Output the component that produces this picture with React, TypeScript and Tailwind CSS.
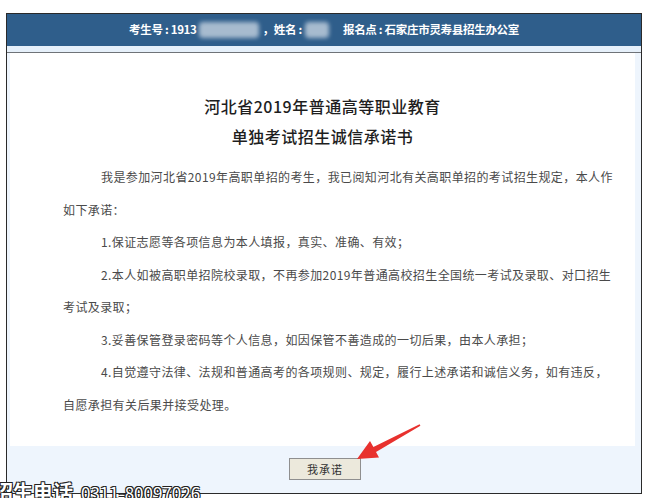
const items = [
  "我是参加河北省2019年高职单招的考生，我已阅知河北有关高职单招的考试招生规定，本人作如下承诺：",
  "1.保证志愿等各项信息为本人填报，真实、准确、有效；",
  "2.本人如被高职单招院校录取，不再参加2019年普通高校招生全国统一考试及录取、对口招生考试及录取；",
  "3.妥善保管登录密码等个人信息，如因保管不善造成的一切后果，由本人承担；",
  "4.自觉遵守法律、法规和普通高考的各项规则、规定，履行上述承诺和诚信义务，如有违反，自愿承担有关后果并接受处理。",
];

export default function App() {
  return (
    <div className="relative w-[654px] h-[498px] overflow-hidden bg-white font-['Noto_Sans_CJK_SC',sans-serif]">
      <div className="ml-[6px] mt-[13px] w-[636px] h-[481px] border border-[#2a2a2a] bg-[#eef5fd] flex flex-col">
        {/* Header */}
        <div className="h-[32px] bg-[#2f5e8b] flex items-center justify-center text-white text-[11.5px] font-bold tracking-[-0.3px]">
          <span>考生号 : 1913</span>
          <span className="mx-[2px] w-[60px] h-[16px] rounded-sm bg-[#a7bbcf] blur-[2px]" />
          <span className="ml-[2px]">，姓名 :</span>
          <span className="ml-[3px] w-[24px] h-[16px] rounded-sm bg-[#a7bbcf] blur-[2px]" />
          <span className="ml-[14px]">报名点 : 石家庄市灵寿县招生办公室</span>
        </div>
        <div className="h-[6px] bg-[#e6f0fa]" />
        <div className="h-[1px] bg-[#6f7378]" />

        {/* Content */}
        <div className="ml-[3px] mr-[6px] h-[393px] bg-white pt-[38px]">
          <div className="text-center text-[16px] font-medium text-[#1e1e1e] leading-[30px] tracking-[0.5px]">
            <p>河北省2019年普通高等职业教育</p>
            <p>单独考试招生诚信承诺书</p>
          </div>
          <div className="mt-[10px] pl-[53px] pr-[19px] text-[12px] leading-[32.5px] tracking-[0.4px] text-[#4a4a4a]">
            {items.map((t) => (
              <p key={t} className="indent-[38px]">
                {t}
              </p>
            ))}
          </div>
        </div>

        {/* Footer */}
        <div className="flex-1 flex justify-center pt-[12px]">
          <button className="w-[72px] h-[22px] ml-[2px] bg-[#ece9dc] border border-[#8f8f8f] text-[11px] text-[#333] tracking-[1px]">
            我承诺
          </button>
        </div>
      </div>

      {/* Red arrow */}
      <svg className="absolute left-0 top-0" width="654" height="498" viewBox="0 0 654 498">
        <polygon
          points="357,459 370,441 373.4,447 419.6,424.2 420.4,425.8 376,452 379,457.5"
          fill="#e8312e"
        />
      </svg>

      {/* Watermark */}
      <div className="absolute left-[-7px] top-[477px] whitespace-nowrap text-white font-bold [text-shadow:1px_1px_0_#222,-1px_-1px_0_#222,1px_-1px_0_#222,-1px_1px_0_#222]">
        <span className="text-[20px]">招生电话</span>
        <span className="ml-[8px] text-[17px] font-normal">0311-80097026</span>
      </div>
    </div>
  );
}
